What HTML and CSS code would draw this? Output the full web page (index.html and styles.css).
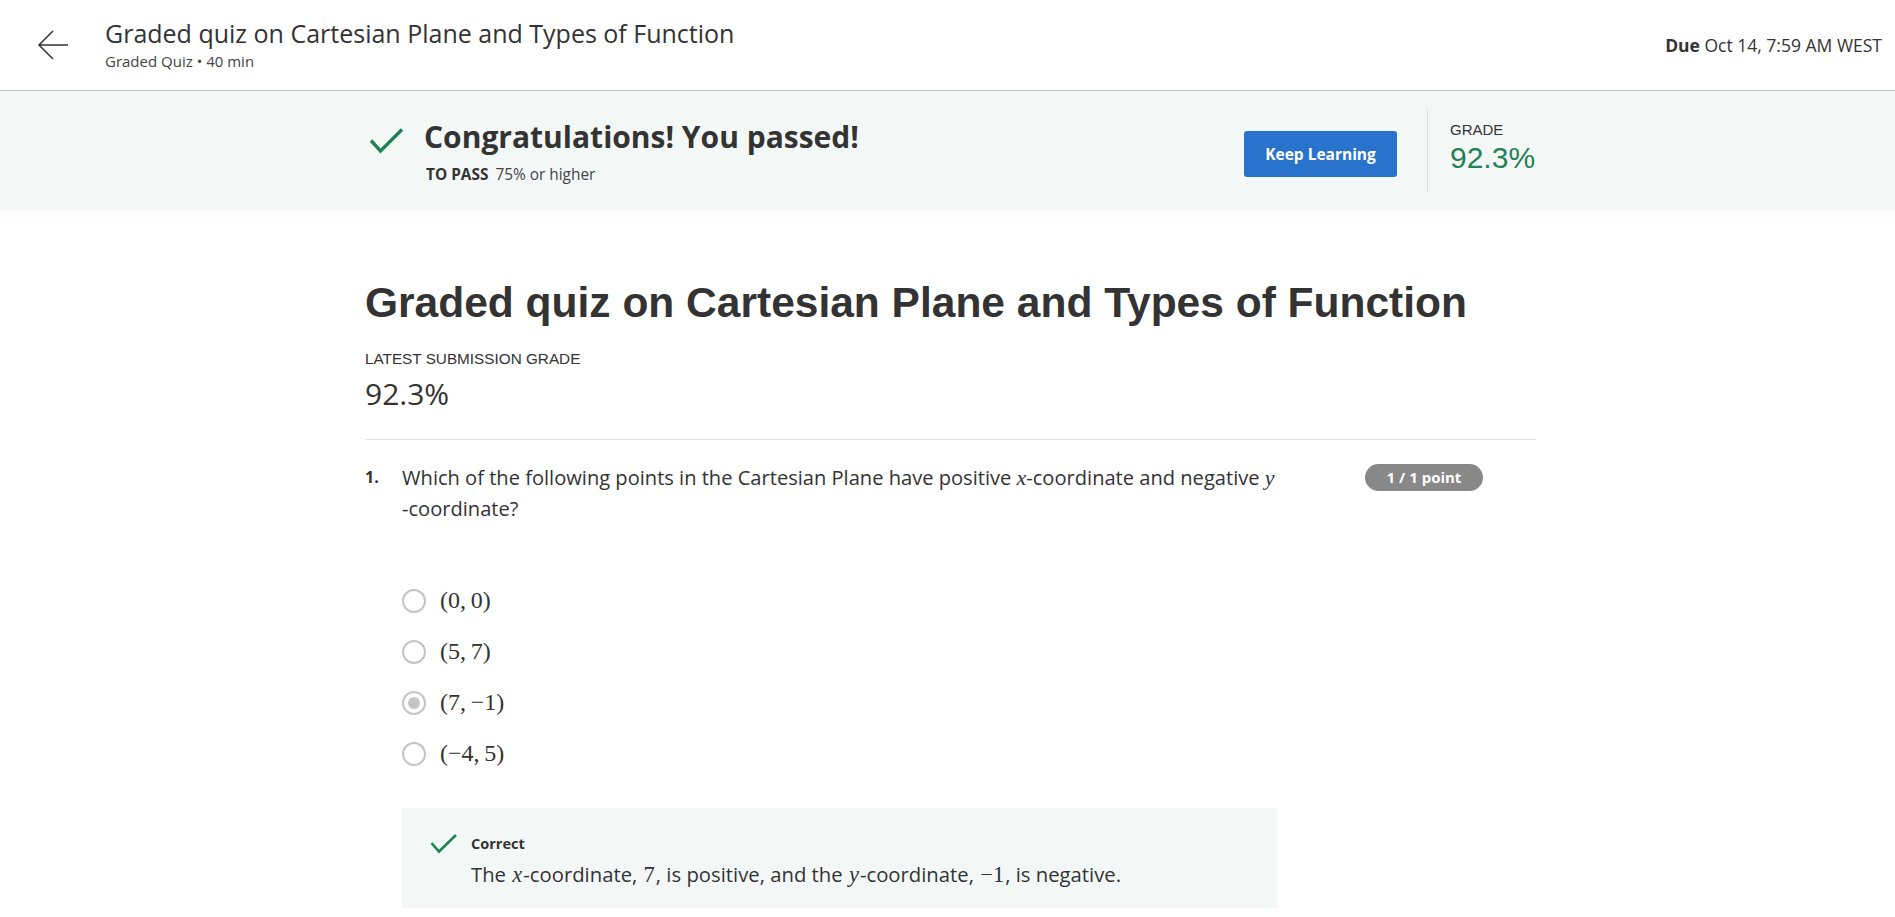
FILE: index.html
```html
<!DOCTYPE html>
<html>
<head>
<meta charset="utf-8">
<link rel="stylesheet" href="styles.css">
</head>
<body>
<header class="topbar">
  <div class="back">
    <svg width="32" height="32" viewBox="0 0 32 32"><path d="M2 15 H31 M16 1 L2 15 L16 29" fill="none" stroke="#333" stroke-width="1.5"/></svg>
  </div>
  <div class="top-title">
    <div class="t1">Graded quiz on Cartesian Plane and Types of Function</div>
    <div class="t2">Graded Quiz • 40 min</div>
  </div>
  <div class="due"><b>Due</b> Oct 14, 7:59 AM WEST</div>
</header>

<section class="banner">
  <div class="banner-inner">
    <div class="passed">
      <svg class="bigcheck" width="36" height="28" viewBox="0 0 36 28"><path d="M2 12.5 L11.5 23 L33 1.5" fill="none" stroke="#1f8354" stroke-width="3.4"/></svg>
      <div>
        <div class="congrats">Congratulations! You passed!</div>
        <div class="topass"><b>TO PASS</b> 75% or higher</div>
      </div>
    </div>
    <div class="banner-right">
      <button class="keep">Keep Learning</button>
      <div class="vdiv"></div>
      <div class="grade">
        <div class="grade-label">GRADE</div>
        <div class="grade-val">92.3%</div>
      </div>
    </div>
  </div>
</section>

<main class="content">
  <h1>Graded quiz on Cartesian Plane and Types of Function</h1>
  <div class="latest-label">LATEST SUBMISSION GRADE</div>
  <div class="latest-val">92.3%</div>
  <hr class="sep">

  <div class="question">
    <div class="qnum">1.</div>
    <div class="qbody">
      <div class="qtext">Which of the following points in the Cartesian Plane have positive <span class="m mi">x</span>-coordinate and negative <span class="m mi">y</span><wbr><span class="nw">-coordinate?</span></div>
      <ul class="options">
        <li><span class="radio"></span><span class="m">(0,&thinsp;0)</span></li>
        <li><span class="radio"></span><span class="m">(5,&thinsp;7)</span></li>
        <li><span class="radio checked"></span><span class="m">(7,&thinsp;−1)</span></li>
        <li><span class="radio"></span><span class="m">(−4,&thinsp;5)</span></li>
      </ul>
      <div class="feedback">
        <svg class="smallcheck" width="28" height="20" viewBox="0 0 28 20"><path d="M1.5 9 L9 17.5 L26 1" fill="none" stroke="#1f8354" stroke-width="2.6"/></svg>
        <div>
          <div class="fb-title">Correct</div>
          <div class="fb-text">The <span class="m mi">x</span>-coordinate, <span class="m">7</span>, is positive, and the <span class="m mi">y</span>-coordinate, <span class="m">−1</span>, is negative.</div>
        </div>
      </div>
    </div>
    <div class="badge">1 / 1 point</div>
  </div>
</main>
</body>
</html>
```

FILE: styles.css
```css
* { box-sizing: border-box; }
html, body { margin: 0; padding: 0; background: #fff; }
body { font-family: "Open Sans", "Liberation Sans", sans-serif; color: #333; }

.topbar {
  height: 91px;
  display: flex;
  align-items: flex-start;
  border-bottom: 1px solid #c6c6c6;
  padding: 0 13px 0 37px;
}
.back { margin-top: 30px; width: 32px; height: 32px; }
.back svg { display: block; }
.top-title { margin-left: 36px; margin-top: 17px; flex: 1; }
.t1 { font-size: 25px; line-height: 32px; color: #333; }
.t2 { font-size: 15px; line-height: 20px; color: #444; margin-top: 2px; }
.due { margin-top: 33px; font-size: 17.5px; line-height: 24px; color: #333; }
.due b { font-weight: 700; }

.banner { background: #f3f8f7; height: 119px; }
.banner-inner {
  width: 1177px; margin: 0 auto; padding-left: 6px; height: 100%;
  display: flex; justify-content: space-between; align-items: stretch;
}
.passed { display: flex; align-items: flex-start; padding-left: 4px; padding-top: 26px; }
.bigcheck { margin-top: 11px; margin-right: 19px; display: block; }
.congrats { font-size: 30px; font-weight: 700; line-height: 40px; color: #333; }
.topass { font-size: 15.4px; line-height: 20px; margin-top: 8px; margin-left: 2px; color: #444; }
.topass b { font-weight: 700; margin-right: 3px; color: #333; }

.banner-right { display: flex; align-items: center; height: 100%; }
.keep {
  width: 153px; height: 46px; background: #2a73cc; color: #fff; border: none; border-radius: 3px;
  font-family: "Open Sans", sans-serif; font-weight: 700; font-size: 15.5px; margin-top: 6px;
}
.vdiv { width: 1px; height: 84px; background: #dcdcdc; margin: 0 22px 0 30px; }
.grade { width: 86px; margin-top: -6px; }
.grade-label { font-family: "Liberation Sans", Arial, sans-serif; font-size: 15px; line-height: 18px; color: #333; }
.grade-val { font-family: "Liberation Sans", Arial, sans-serif; font-size: 30px; line-height: 34px; margin-top: 2px; color: #1f8354; }

.content { width: 1177px; margin: 0 auto; padding-left: 6px; }
h1 {
  font-family: "Liberation Sans", Arial, sans-serif; font-weight: 700; font-size: 42.5px;
  line-height: 50px; margin: 68px 0 0 0; color: #333;
}
.latest-label { font-family: "Liberation Sans", Arial, sans-serif; font-size: 15.3px; margin-top: 22px; line-height: 18px; color: #333; }
.latest-val { font-size: 30px; line-height: 36px; margin-top: 8px; color: #333; }
.sep { border: none; border-top: 1px solid #e1e1e1; margin: 27px 0 0 0; }

.question { display: flex; align-items: flex-start; margin-top: 22px; }
.qnum { width: 37px; font-weight: 700; font-size: 16px; line-height: 30px; color: #333; }
.qbody { width: 890px; }
.qtext { font-size: 20.1px; line-height: 31px; color: #333; }
.nw { white-space: nowrap; }
.m { font-family: "Liberation Serif", "DejaVu Serif", serif; font-size: 22px; display: inline-block; }
.mi { font-style: italic; }
.badge {
  margin-left: 73px; margin-top: 2px; height: 27px; width: 118px; border-radius: 14px;
  background: #888; color: #fff; font-weight: 700; font-size: 15px; line-height: 27px; text-align: center;
}

.options { list-style: none; margin: 51px 0 0 0; padding: 0; }
.options li { display: flex; align-items: center; height: 51px; }
.radio {
  width: 24px; height: 24px; border-radius: 50%; border: 2px solid #c4c4c4; margin-right: 14px;
  display: inline-flex; align-items: center; justify-content: center; flex: none;
}
.radio.checked::after { content: ""; width: 12px; height: 12px; border-radius: 50%; background: #c4c4c4; }
.options .m { font-size: 24px; color: #333; }

.feedback {
  margin-top: 29px; background: #f3f8f7; height: 100px; width: 875px;
  display: flex; align-items: flex-start; padding: 26px 0 0 28px;
}
.smallcheck { display: block; margin-top: 0; margin-right: 13px; }
.fb-title { font-weight: 700; font-size: 14.5px; line-height: 20px; color: #333; }
.fb-text { font-size: 20.3px; line-height: 28px; margin-top: 6px; color: #333; }
.fb-text .m { font-size: 22.5px; margin: 0 1px; }
```
